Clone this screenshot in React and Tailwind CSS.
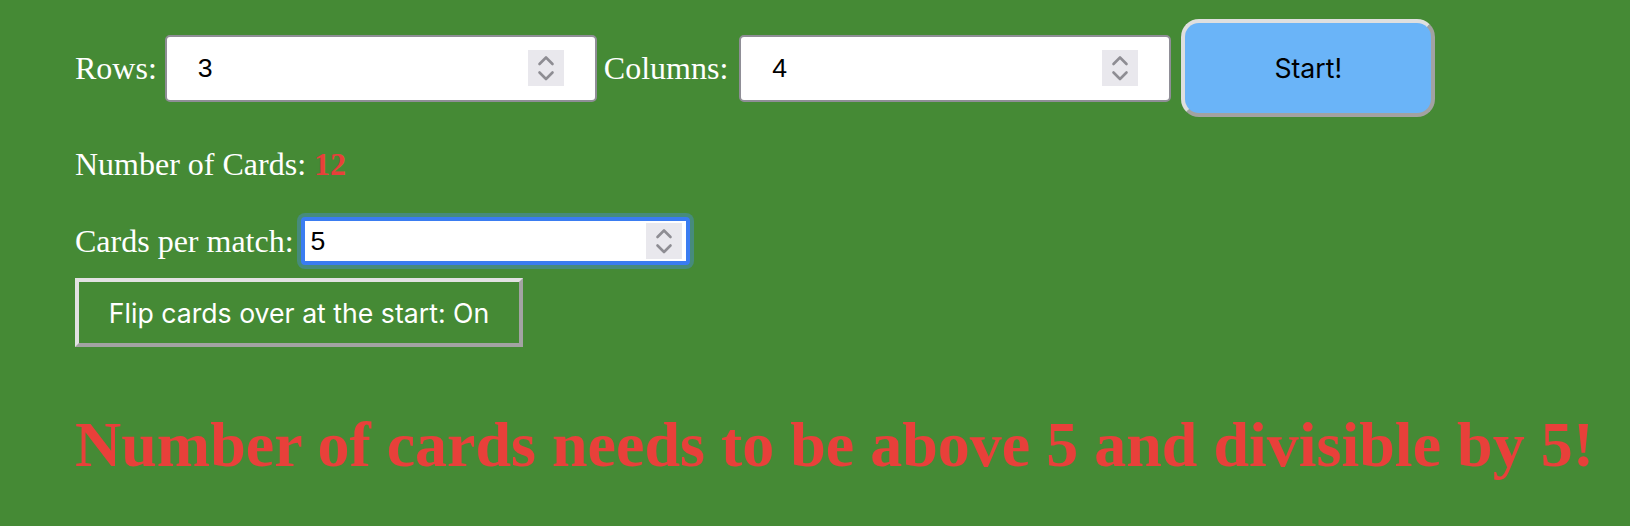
import React from "react";

function Spinner() {
  return (
    <span className="flex h-[36px] w-[36px] shrink-0 items-center justify-center bg-[#e9e8ed]">
      <svg width="36" height="36" viewBox="0 0 36 36" fill="none">
        <path d="M11.5 14 L18 7.5 L24.5 14" stroke="#8e8d93" strokeWidth="2.6" strokeLinecap="round" strokeLinejoin="round" />
        <path d="M11.5 22.5 L18 29 L24.5 22.5" stroke="#8e8d93" strokeWidth="2.6" strokeLinecap="round" strokeLinejoin="round" />
      </svg>
    </span>
  );
}

function NumberBox({ value }) {
  return (
    <div className="flex h-[67px] w-[432px] items-center rounded-[5px] border-2 border-[#8f8e96] bg-white pl-[31px] pr-[31px]">
      <input
        type="text"
        defaultValue={value}
        className="min-w-0 flex-1 bg-transparent text-[26.67px] text-black outline-none [font-family:'Liberation_Sans',Arial,sans-serif]"
      />
      <Spinner />
    </div>
  );
}

export default function App() {
  return (
    <div className="min-h-screen bg-[#458a35] px-[75px] pt-[19px] text-white [font-family:'Liberation_Serif','Times_New_Roman',serif]">
      <div className="flex h-[98px] items-center">
        <span className="text-[32px] leading-[36px]">Rows:</span>
        <div className="ml-[8px]">
          <NumberBox value="3" />
        </div>
        <span className="ml-[7px] text-[32px] leading-[36px]">Columns:</span>
        <div className="ml-[11px]">
          <NumberBox value="4" />
        </div>
        <button className="ml-[10px] h-[98px] w-[254px] rounded-[18px] border-4 border-t-[#dfdfdf] border-l-[#dfdfdf] border-r-[#a2a2a2] border-b-[#a2a2a2] bg-[#6ab4f8] text-[26.67px] text-black [font-family:Inter,'Noto_Sans',sans-serif]">
          Start!
        </button>
      </div>

      <p className="mt-[29px] text-[32px] leading-[36px]">
        Number of Cards: <span className="font-bold text-[#e8403a]">12</span>
      </p>

      <div className="mt-[35px] flex items-center">
        <span className="text-[32px] leading-[32px]">Cards per match:</span>
        <div className="ml-[7px] flex h-[48px] w-[389px] items-center rounded-[4px] border-4 border-[#3a7cf1] bg-white pl-[6px] pr-[4px] shadow-[0_0_0_4px_rgba(70,140,210,0.45)]">
          <input
            type="text"
            defaultValue="5"
            className="min-w-0 flex-1 bg-transparent text-[26.67px] text-black outline-none [font-family:'Liberation_Sans',Arial,sans-serif]"
          />
          <Spinner />
        </div>
      </div>

      <button className="mt-[13px] h-[69px] w-[448px] border-4 border-t-[#e2e2e2] border-l-[#e2e2e2] border-r-[#a3a3a3] border-b-[#a3a3a3] bg-[#458a35] text-[26.67px] text-white [font-family:Inter,'Noto_Sans',sans-serif]">
        Flip cards over at the start: On
      </button>

      <h1 className="mt-[61px] whitespace-nowrap text-[64px] font-bold leading-[74px] text-[#e8403a]">
        Number of cards needs to be above 5 and divisible by 5!
      </h1>
    </div>
  );
}
